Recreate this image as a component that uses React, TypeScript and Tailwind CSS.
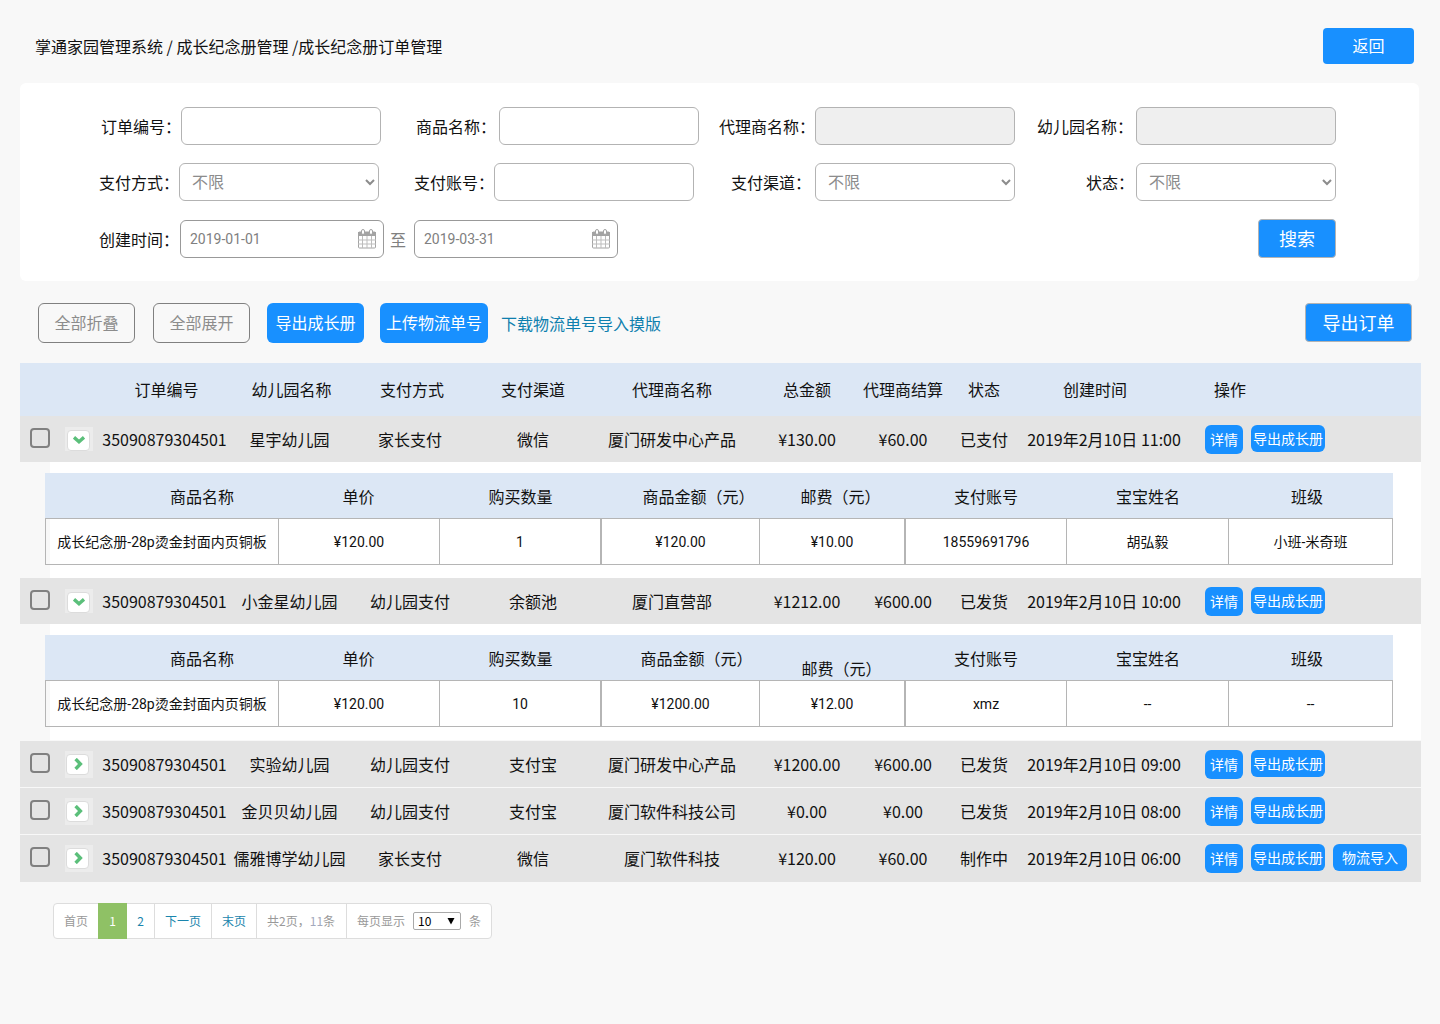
import React, { useState } from 'react'

const orders = [
  {
    id: 1,
    no: '35090879304501',
    school: '星宇幼儿园',
    method: '家长支付',
    channel: '微信',
    agent: '厦门研发中心产品',
    total: '¥130.00',
    settle: '¥60.00',
    status: '已支付',
    created: '2019年2月10日 11:00',
    lowPostage: false,
    detail: ['成长纪念册-28p烫金封面内页铜板', '¥120.00', '1', '¥120.00', '¥10.00', '18559691796', '胡弘毅', '小班-米奇班'],
  },
  {
    id: 2,
    no: '35090879304501',
    school: '小金星幼儿园',
    method: '幼儿园支付',
    channel: '余额池',
    agent: '厦门直营部',
    total: '¥1212.00',
    settle: '¥600.00',
    status: '已发货',
    created: '2019年2月10日 10:00',
    lowPostage: true,
    detail: ['成长纪念册-28p烫金封面内页铜板', '¥120.00', '10', '¥1200.00', '¥12.00', 'xmz', '--', '--'],
  },
  {
    id: 3,
    no: '35090879304501',
    school: '实验幼儿园',
    method: '幼儿园支付',
    channel: '支付宝',
    agent: '厦门研发中心产品',
    total: '¥1200.00',
    settle: '¥600.00',
    status: '已发货',
    created: '2019年2月10日 09:00',
  },
  {
    id: 4,
    no: '35090879304501',
    school: '金贝贝幼儿园',
    method: '幼儿园支付',
    channel: '支付宝',
    agent: '厦门软件科技公司',
    total: '¥0.00',
    settle: '¥0.00',
    status: '已发货',
    created: '2019年2月10日 08:00',
  },
  {
    id: 5,
    no: '35090879304501',
    school: '儒雅博学幼儿园',
    method: '家长支付',
    channel: '微信',
    agent: '厦门软件科技',
    total: '¥120.00',
    settle: '¥60.00',
    status: '制作中',
    created: '2019年2月10日 06:00',
    canImport: true,
  },
]

const Field = (props: any) => {
  return (
    <div className={'flex items-center justify-end ' + (props.className || '')}>
      <label htmlFor={props.id} className={'whitespace-nowrap ' + (props.labelClass || '')}>
        {props.label}
      </label>
      {props.select ? (
        <select
          id={props.id}
          className="h-[38px] w-[200px] rounded-md border border-[#b3b3b3] bg-white pb-0.5 pl-2 text-[#8c8c8c]"
        >
          <option>不限</option>
        </select>
      ) : (
        <input
          id={props.id}
          type="text"
          disabled={props.disabled}
          className="h-[38px] w-[200px] rounded-md border border-[#b3b3b3] bg-white px-2 disabled:bg-[#efefef]"
        />
      )}
    </div>
  )
}

const CalendarIcon = () => (
  <svg width="20" height="21" viewBox="0 0 20 21" fill="none" className="shrink-0">
    <path d="M1 4h18v4H1z" fill="#a3a3a3" />
    <rect x="1.5" y="4" width="17" height="16" rx="1" stroke="#a3a3a3" />
    <path d="M1 12h18M1 16h18M5.5 8v12M10 8v12M14.5 8v12" stroke="#bdbdbd" />
    <rect x="4.5" y="1.5" width="3" height="5" rx="1.5" fill="#fff" stroke="#a3a3a3" />
    <rect x="12.5" y="1.5" width="3" height="5" rx="1.5" fill="#fff" stroke="#a3a3a3" />
  </svg>
)

const DateBox = (props: any) => {
  const [value, setValue] = useState(props.value)
  return (
    <div className="flex h-[38px] w-[204px] items-center rounded-md border border-[#999] bg-white pr-1.5 pl-[9px]">
      <input
        id={props.id}
        aria-label={props.name}
        type="text"
        value={value}
        onChange={(e) => setValue(e.target.value)}
        className="min-w-0 flex-1 font-[Roboto,sans-serif] text-sm text-[#808080]"
      />
      <CalendarIcon />
    </div>
  )
}

const Toggle = (props: any) => {
  return (
    <div
      className={
        'mx-auto flex w-7 items-center justify-center bg-[#ececec] ' + (props.open ? 'h-6 pt-0.5' : 'h-[27px] pr-0.5')
      }
    >
      <button
        type="button"
        aria-label={props.open ? '折叠' : '展开'}
        onClick={props.onClick}
        className="flex h-[21px] w-[23px] items-center justify-center rounded-sm border border-[#dcdcdc] bg-white"
      >
        <svg width="12" height="12" viewBox="0 0 12 12" fill="none" stroke="#5bbf7a" strokeWidth="3.4">
          {props.open ? <path d="M1 3.4l5 4.4 5-4.4" /> : <path d="M3.6 1l4.8 5-4.8 5" />}
        </svg>
      </button>
    </div>
  )
}

const Detail = (props: any) => {
  const cells = props.order.detail
  const low = props.order.lowPostage
  return (
    <div className="ml-[30px] bg-white pt-[11px] pr-7 pb-[13px]">
      <table className="-ml-[5px] w-[calc(100%+5px)] table-fixed border-separate border-spacing-0">
        <colgroup>
          <col className="w-[234px]" />
          <col className="w-[161px]" />
          <col className="w-[161px]" />
          <col className="w-[159px]" />
          <col className="w-[145px]" />
          <col className="w-[162px]" />
          <col className="w-[162px]" />
          <col />
        </colgroup>
        <thead>
          <tr className="h-[45px] bg-[#dce7f5] whitespace-nowrap [&>th]:p-0 [&>th]:font-normal">
            <th>
              <div className="pl-20">商品名称</div>
            </th>
            <th>
              <div className="pr-0.5">单价</div>
            </th>
            <th>购买数量</th>
            <th>
              <div className={low ? 'pl-8' : 'pl-9'}>商品金额（元）</div>
            </th>
            <th>
              <div className={low ? 'pt-5 pl-[18px]' : 'pl-4'}>邮费（元）</div>
            </th>
            <th>支付账号</th>
            <th>宝宝姓名</th>
            <th>
              <div className="pr-2">班级</div>
            </th>
          </tr>
        </thead>
        <tbody>
          <tr className="h-[47px]">
            {cells.map((cell: string, i: number) => (
              <td
                key={i}
                className={
                  'border-y border-r border-[#b5b5b5] p-0 text-center font-[Roboto,"Noto_Sans_CJK_SC",sans-serif] text-sm whitespace-nowrap ' +
                  (i === 0 || i === 3 || i === 5 ? 'border-l' : '')
                }
              >
                {cell}
              </td>
            ))}
          </tr>
        </tbody>
      </table>
    </div>
  )
}

const OrderTable = () => {
  const [open, setOpen] = useState([1, 2])

  function toggle(id: number) {
    setOpen(open.includes(id) ? open.filter((o) => o !== id) : [...open, id])
  }

  return (
    <table className="mt-5 w-full table-fixed border-collapse text-center whitespace-nowrap">
      <colgroup>
        <col className="w-10" />
        <col className="w-[37px]" />
        <col className="w-[135px]" />
        <col className="w-[115px]" />
        <col className="w-[126px]" />
        <col className="w-[120px]" />
        <col className="w-[158px]" />
        <col className="w-[112px]" />
        <col className="w-[80px]" />
        <col className="w-[82px]" />
        <col className="w-[158px]" />
        <col />
      </colgroup>
      <thead>
        <tr className="h-[53px] bg-[#dce7f5] [&>th]:px-0 [&>th]:pt-0 [&>th]:pb-0.5 [&>th]:font-normal">
          <th></th>
          <th></th>
          <th>
            <div className="pl-1">订单编号</div>
          </th>
          <th>
            <div className="pl-1">幼儿园名称</div>
          </th>
          <th>
            <div className="pl-1">支付方式</div>
          </th>
          <th>支付渠道</th>
          <th>代理商名称</th>
          <th>总金额</th>
          <th>代理商结算</th>
          <th>状态</th>
          <th>
            <div className="pr-[18px]">创建时间</div>
          </th>
          <th>
            <div className="pl-[31px] text-left">操作</div>
          </th>
        </tr>
      </thead>
      {orders.map((order: any, i) => (
        <tbody key={order.id}>
          <tr className={'bg-[#e4e4e4] [&>td]:p-0 ' + (i > 1 ? 'h-[47px] border-t border-[#f8f8f8]' : 'h-[46px]')}>
            <td>
              <div className="pb-0.5">
                <input
                  type="checkbox"
                  aria-label={'选择订单 ' + order.no}
                  className="mx-auto block size-5 appearance-none rounded-sm border-2 border-[#808080] checked:bg-[#1890ff]"
                />
              </div>
            </td>
            <td>
              <Toggle open={open.includes(order.id) && !!order.detail} onClick={() => toggle(order.id)} />
            </td>
            <td>{order.no}</td>
            <td>{order.school}</td>
            <td>{order.method}</td>
            <td>{order.channel}</td>
            <td>{order.agent}</td>
            <td>{order.total}</td>
            <td>{order.settle}</td>
            <td>{order.status}</td>
            <td>{order.created}</td>
            <td>
              <div className="flex items-start gap-2 pl-[22px] text-sm text-white">
                <button type="button" className="h-[29px] w-[38px] rounded-md bg-[#1890ff]">
                  详情
                </button>
                <button type="button" className="h-[27px] w-[74px] rounded-md bg-[#1890ff]">
                  导出成长册
                </button>
                {order.canImport && (
                  <button type="button" className="h-[27px] w-[74px] rounded-md bg-[#1890ff]">
                    物流导入
                  </button>
                )}
              </div>
            </td>
          </tr>
          {order.detail && open.includes(order.id) && (
            <tr>
              <td colSpan={12} className="p-0">
                <Detail order={order} />
              </td>
            </tr>
          )}
        </tbody>
      ))}
    </table>
  )
}

const Pagination = () => {
  return (
    <nav className="mt-[21px] ml-[33px] flex h-9 w-fit items-stretch rounded-sm border border-[#ddd] bg-white text-xs leading-[34px] text-[#999]">
      <span className="px-[10px]">首页</span>
      <a href="#1" className="-my-px w-[29px] bg-[#8fc165] text-center leading-9 text-white">
        1
      </a>
      <a href="#2" className="w-7 border-r border-[#ddd] text-center text-[#1a85ad]">
        2
      </a>
      <a href="#next" className="border-r border-[#ddd] px-[10px] text-[#1a85ad]">
        下一页
      </a>
      <a href="#last" className="border-r border-[#ddd] px-[10px] text-[#1a85ad]">
        末页
      </a>
      <span className="border-r border-[#ddd] pr-[11px] pl-[10px]">
        共2页，<span className="text-[#a3a9bd]">11</span>条
      </span>
      <div className="flex items-center px-[10px]">
        <label htmlFor="pageSize">每页显示</label>
        <div className="relative mx-2 h-[18px] w-12">
          <select
            id="pageSize"
            className="block h-[18px] w-12 appearance-none rounded-xs border border-[#a9a9a9] bg-white pl-1 leading-4 text-black"
          >
            <option>10</option>
          </select>
          <svg width="8" height="7" viewBox="0 0 8 7" className="pointer-events-none absolute top-[6px] right-[6px]">
            <path d="M0.5 0h7L4 6.5z" fill="#000" />
          </svg>
        </div>
        <span>条</span>
      </div>
    </nav>
  )
}

const App = () => {
  return (
    <div className='min-h-screen bg-[#f8f8f8] pt-7 pr-[19px] pb-10 pl-5 font-["Noto_Sans_CJK_SC",sans-serif] text-base leading-6 text-[#111]'>
      <header className="flex items-center justify-between pr-[7px] pl-[15px]">
        <h1>掌通家园管理系统 / 成长纪念册管理 /成长纪念册订单管理</h1>
        <button type="button" className="h-9 w-[91px] rounded-sm bg-[#1890ff] pb-0.5 text-white">
          返回
        </button>
      </header>

      <form className="mt-[19px] mr-0.5 rounded-md bg-white pt-6 pr-[83px] pb-[23px] pl-[79px]">
        <div className="grid grid-cols-[282fr_318fr_316fr_321fr] gap-y-[18px]">
          <Field id="orderNo" label="订单编号：" />
          <Field id="goods" label="商品名称：" labelClass="mr-[3px]" />
          <Field id="agent" label="代理商名称：" disabled />
          <Field id="school" label="幼儿园名称：" labelClass="mr-[3px]" disabled />
          <Field id="method" label="支付方式：" className="pr-0.5" select />
          <Field id="account" label="支付账号：" className="pr-[5px]" />
          <Field id="channel" label="支付渠道：" labelClass="mr-1" select />
          <Field id="status" label="状态：" labelClass="mr-0.5" select />
        </div>
        <div className="mt-[18px] flex items-center">
          <label htmlFor="from" className="w-[81px]">
            创建时间：
          </label>
          <DateBox id="from" name="开始日期" value="2019-01-01" />
          <span className="w-[30px] pr-0.5 text-center text-[#808080]">至</span>
          <DateBox id="to" name="结束日期" value="2019-03-31" />
          <button
            type="button"
            className="ml-auto h-[39px] w-[78px] rounded-sm border border-[#b3b3b3] bg-[#1890ff] pb-0.5 text-lg text-white"
          >
            搜索
          </button>
        </div>
      </form>

      <div className="mt-[22px] flex h-10 items-start pr-[9px] pl-[18px]">
        <button type="button" className="h-10 w-[97px] rounded-md border border-[#808080] pb-0.5 text-[#8c8c8c]">
          全部折叠
        </button>
        <button
          type="button"
          className="ml-[18px] h-10 w-[97px] rounded-md border border-[#808080] pb-0.5 text-[#8c8c8c]"
        >
          全部展开
        </button>
        <button type="button" className="ml-[17px] h-10 w-[97px] rounded-md bg-[#1890ff] pb-0.5 text-white">
          导出成长册
        </button>
        <button type="button" className="ml-4 h-10 w-[108px] rounded-md bg-[#1890ff] pb-0.5 text-white">
          上传物流单号
        </button>
        <a href="#template" className="ml-[13px] leading-10 text-[#0e7fae]">
          下载物流单号导入摸版
        </a>
        <button
          type="button"
          className="ml-auto h-[39px] w-[107px] rounded-sm border border-[#b3b3b3] bg-[#1890ff] pb-0.5 text-lg text-white"
        >
          导出订单
        </button>
      </div>

      <OrderTable />
      <Pagination />
    </div>
  )
}

export default App
